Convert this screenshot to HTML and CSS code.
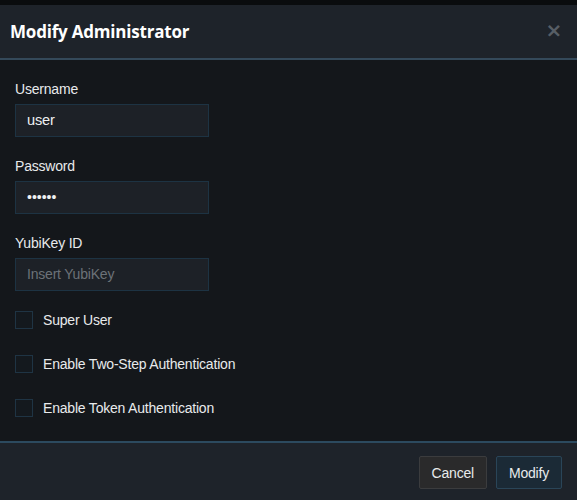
FILE: index.html
```html
<!DOCTYPE html>
<html>
<head>
<meta charset="utf-8">
<link rel="stylesheet" href="styles.css">
</head>
<body>
<div class="modal">
  <div class="modal-header">
    <h1 class="title">Modify Administrator</h1>
    <span class="close">&times;</span>
  </div>
  <div class="modal-body">
    <div class="field">
      <label class="label">Username</label>
      <div class="input">user</div>
    </div>
    <div class="field">
      <label class="label">Password</label>
      <div class="input dots">&bull;&bull;&bull;&bull;&bull;&bull;</div>
    </div>
    <div class="field">
      <label class="label">YubiKey ID</label>
      <div class="input placeholder">Insert YubiKey</div>
    </div>
    <div class="checks">
      <div class="check"><span class="box"></span><span>Super User</span></div>
      <div class="check"><span class="box"></span><span>Enable Two-Step Authentication</span></div>
      <div class="check"><span class="box"></span><span>Enable Token Authentication</span></div>
    </div>
  </div>
  <div class="modal-footer">
    <button class="btn btn-cancel">Cancel</button>
    <button class="btn btn-primary">Modify</button>
  </div>
</div>
</body>
</html>
```
FILE: styles.css
```css
html, body {
  margin: 0;
  padding: 0;
  background: #0a0c0e;
  height: 500px;
  overflow: hidden;
}
body {
  font-family: "Liberation Sans", Arial, sans-serif;
  color: #e6e8ea;
  letter-spacing: -0.2px;
}
.modal {
  margin-top: 5px;
  display: flex;
  flex-direction: column;
  height: 495px;
  background: #14171b;
}
.modal-header {
  height: 53px;
  background: #1e232a;
  border-bottom: 2px solid #34495a;
  display: flex;
  align-items: center;
  justify-content: space-between;
  padding: 0 15px 0 10px;
}
.title {
  margin: 0;
  font-family: "Open Sans", sans-serif;
  font-weight: 700;
  font-size: 17px;
  color: #ffffff;
  letter-spacing: -0.2px;
}
.close {
  color: #575e66;
  font-size: 20px;
  font-weight: 700;
  font-family: "DejaVu Sans", sans-serif;
  line-height: 1;
  margin-top: -4px;
}
.modal-body {
  flex: 1;
  padding: 19px 15px 0 15px;
  display: flex;
  flex-direction: column;
}
.field {
  display: flex;
  flex-direction: column;
  margin-bottom: 19px;
}
.label {
  font-size: 14px;
  line-height: 21px;
  margin-bottom: 4px;
  color: #e8eaec;
}
.input {
  width: 170px;
  height: 31px;
  border: 1px solid #1d3343;
  background: #1d2127;
  padding: 0 11px;
  font-size: 14.6px;
  line-height: 31px;
  color: #eef0f2;
}
.input.dots {
  font-size: 14px;
  letter-spacing: 0;
}
.input.placeholder {
  font-size: 14px;
  color: #6c7278;
}
.checks {
  display: flex;
  flex-direction: column;
  gap: 26px;
  margin-top: 1px;
}
.check {
  display: flex;
  align-items: center;
  gap: 10px;
  font-size: 14px;
  height: 18px;
  color: #e8eaec;
}
.box {
  width: 16px;
  height: 16px;
  border: 1px solid #1f3444;
  background: #14191e;
}
.modal-footer {
  height: 57px;
  background: #1e232a;
  border-top: 2px solid #2c4a5f;
  display: flex;
  justify-content: flex-end;
  align-items: center;
  gap: 9px;
  padding: 0 15px;
}
.btn {
  height: 33px;
  padding: 0 12px;
  font-family: "Liberation Sans", Arial, sans-serif;
  font-size: 14px;
  letter-spacing: -0.2px;
  color: #e8eaec;
  border-radius: 2px;
  margin-top: 2px;
}
.btn-cancel {
  background: #2a2a2b;
  border: 1px solid #3b3c3e;
}
.btn-primary {
  background: #1b2a36;
  border: 1px solid #2a4558;
}
```
